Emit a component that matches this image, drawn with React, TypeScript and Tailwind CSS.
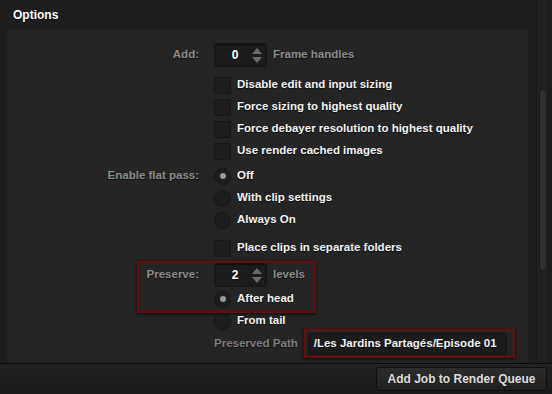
import React from 'react';

const font = { fontFamily: '"Liberation Sans", Arial, sans-serif' };

function Spinner({ value }: { value: string }) {
  return (
    <div className="flex items-center h-[24px] w-[53px] rounded-[3px] bg-[#1c1c1c] border border-[#151515] shadow-[inset_0_1px_1px_rgba(0,0,0,0.5)]">
      <span className="flex-1 text-center text-white text-[12px] font-bold pl-[3px]">{value}</span>
      <span className="flex flex-col items-center gap-[3px] pr-[4px]">
        <span className="w-0 h-0 border-l-[5px] border-r-[5px] border-b-[6px] border-l-transparent border-r-transparent border-b-[#6a6a6a]" />
        <span className="w-0 h-0 border-l-[5px] border-r-[5px] border-t-[6px] border-l-transparent border-r-transparent border-t-[#6a6a6a]" />
      </span>
    </div>
  );
}

function Check({ label }: { label: string }) {
  return (
    <div className="flex items-center gap-[6px] h-[22px]">
      <span className="w-[17px] h-[17px] rounded-[2px] bg-[#1e1e1e] border border-[#171717]" />
      <span className="text-[#f2f2f2] text-[11.5px] font-bold">{label}</span>
    </div>
  );
}

function Radio({ label, on }: { label: string; on?: boolean }) {
  return (
    <div className="flex items-center gap-[6px] h-[22px]">
      <span className="w-[17px] h-[17px] rounded-full bg-[#1e1e1e] border border-[#171717] flex items-center justify-center">
        {on && <span className="w-[6px] h-[6px] rounded-full bg-[#9a9a9a]" />}
      </span>
      <span className="text-[#f2f2f2] text-[11.5px] font-bold">{label}</span>
    </div>
  );
}

function Row({ label, children, className = '' }: { label?: string; children: React.ReactNode; className?: string }) {
  return (
    <div className={`flex items-center gap-[15px] ${className}`}>
      <span className="w-[192px] text-right text-[#8b8b8b] text-[11.5px] font-bold">{label}</span>
      <div className="flex-1">{children}</div>
    </div>
  );
}

export default function App() {
  return (
    <div
      className="w-[552px] h-[394px] bg-[#1e1e1e] flex flex-col overflow-hidden [text-shadow:0_1px_1px_rgba(0,0,0,0.6)]"
      style={font}
    >
      <div className="flex h-[363px]">
        <div className="w-[528px] flex flex-col">
          <div className="h-[30px] pl-[13px] pt-[6px] text-white text-[12px] font-bold">Options</div>

          {/* panel */}
          <div className="relative flex-1 ml-[7px] bg-[#252525] pt-[13px]">
            <Row label="Add:" className="h-[24px]">
              <div className="flex items-center gap-[6px]">
                <Spinner value="0" />
                <span className="text-[#8b8b8b] text-[11.5px] font-bold">Frame handles</span>
              </div>
            </Row>

            <div className="mt-[7px]">
              <Row><Check label="Disable edit and input sizing" /></Row>
              <Row><Check label="Force sizing to highest quality" /></Row>
              <Row><Check label="Force debayer resolution to highest quality" /></Row>
              <Row><Check label="Use render cached images" /></Row>
            </div>

            <div className="mt-[3px]">
              <Row label="Enable flat pass:"><Radio label="Off" on /></Row>
              <Row><Radio label="With clip settings" /></Row>
              <Row><Radio label="Always On" /></Row>
            </div>

            <Row className="mt-[6px]"><Check label="Place clips in separate folders" /></Row>

            <Row label="Preserve:" className="mt-[4px] h-[24px]">
              <div className="flex items-center gap-[6px]">
                <Spinner value="2" />
                <span className="text-[#8b8b8b] text-[11.5px] font-bold">levels</span>
              </div>
            </Row>
            <Row className="mt-[1px]"><Radio label="After head" on /></Row>
            <Row><Radio label="From tail" /></Row>

            <div className="flex items-center mt-[1px] pl-[207px] gap-[10px] h-[22px]">
              <span className="text-[#7c7c7c] text-[11.5px] font-bold whitespace-nowrap">Preserved Path</span>
              <div className="w-[199px] h-[22px] rounded-[2px] bg-[#1c1c1c] border border-[#151515] flex items-center px-[5px] text-[#f2f2f2] text-[11.5px] font-bold whitespace-nowrap">
                /Les Jardins Partagés/Episode 01
              </div>
            </div>

            {/* annotation boxes */}
            <div className="absolute left-[130px] top-[231px] w-[179px] h-[52px] border-2 border-[#6c0c0c] shadow-[0_1px_3px_rgba(0,0,0,0.7)]" />
            <div className="absolute left-[297px] top-[299px] w-[211px] h-[29px] border-2 border-[#6c0c0c] shadow-[0_1px_3px_rgba(0,0,0,0.7)]" />
          </div>
        </div>

        {/* scrollbar */}
        <div className="ml-[8px] w-[13px] bg-[#222] border-l border-r border-[#1a1a1a] relative">
          <div className="absolute left-[2px] top-[89px] w-[8px] h-[182px] rounded-full bg-[#2f2f2f] border border-[#1a1a1a]" />
        </div>
      </div>

      {/* bottom bar */}
      <div className="flex-1 border-t border-[#0b0b0b] bg-gradient-to-b from-[#232323] to-[#1a1a1a] flex items-center justify-end pr-[5px]">
        <button className="h-[24px] w-[171px] rounded-[3px] border border-[#0f0f0f] bg-gradient-to-b from-[#2c2c2c] to-[#1f1f1f] text-[#dcdcdc] text-[12px] font-bold">
          Add Job to Render Queue
        </button>
      </div>
    </div>
  );
}
